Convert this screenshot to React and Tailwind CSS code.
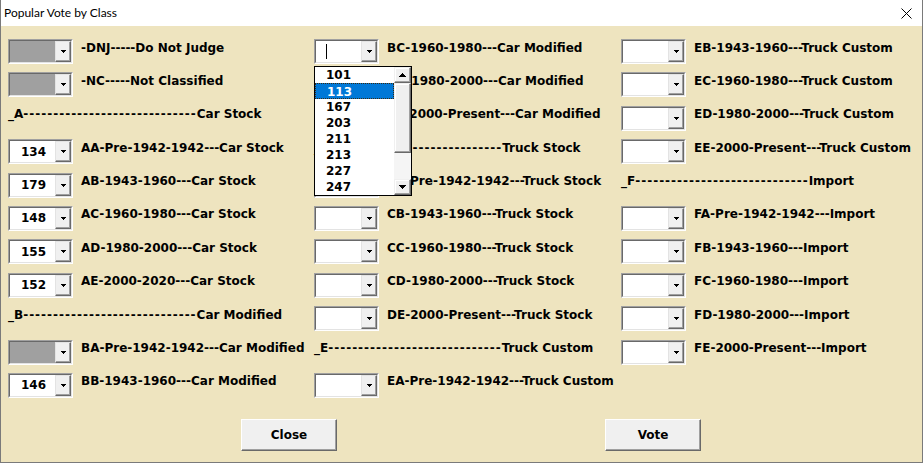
const DASHES = '-----------------------------';

const col1 = [
  { value: '', gray: true, label: '-DNJ-----Do Not Judge' },
  { value: '', gray: true, label: '-NC-----Not Classified' },
  { head: '_A', tail: 'Car Stock' },
  { value: '134', label: 'AA-Pre-1942-1942---Car Stock' },
  { value: '179', label: 'AB-1943-1960---Car Stock' },
  { value: '148', label: 'AC-1960-1980---Car Stock' },
  { value: '155', label: 'AD-1980-2000---Car Stock' },
  { value: '152', label: 'AE-2000-2020---Car Stock' },
  { head: '_B', tail: 'Car Modified' },
  { value: '', gray: true, label: 'BA-Pre-1942-1942---Car Modified' },
  { value: '146', label: 'BB-1943-1960---Car Modified' },
];

const col2 = [
  { value: '', caret: true, open: true, label: 'BC-1960-1980---Car Modified' },
  { value: '', label: 'BD-1980-2000---Car Modified' },
  { value: '', label: 'BE-2000-Present---Car Modified' },
  { head: '_C', tail: 'Truck Stock' },
  { value: '', label: 'CA-Pre-1942-1942---Truck Stock' },
  { value: '', label: 'CB-1943-1960---Truck Stock' },
  { value: '', label: 'CC-1960-1980---Truck Stock' },
  { value: '', label: 'CD-1980-2000---Truck Stock' },
  { value: '', label: 'DE-2000-Present---Truck Stock' },
  { head: '_E', tail: 'Truck Custom' },
  { value: '', label: 'EA-Pre-1942-1942---Truck Custom' },
];

const col3 = [
  { value: '', label: 'EB-1943-1960---Truck Custom' },
  { value: '', label: 'EC-1960-1980---Truck Custom' },
  { value: '', label: 'ED-1980-2000---Truck Custom' },
  { value: '', label: 'EE-2000-Present---Truck Custom' },
  { head: '_F', tail: 'Import' },
  { value: '', label: 'FA-Pre-1942-1942---Import' },
  { value: '', label: 'FB-1943-1960---Import' },
  { value: '', label: 'FC-1960-1980---Import' },
  { value: '', label: 'FD-1980-2000---Import' },
  { value: '', label: 'FE-2000-Present---Import' },
  null,
];

const listItems = ['101', '113', '167', '203', '211', '213', '227', '247'];

function TriDown() {
  return (
    <svg width="5" height="3" shapeRendering="crispEdges">
      <rect x="0" y="0" width="5" height="1" fill="#000" />
      <rect x="1" y="1" width="3" height="1" fill="#000" />
      <rect x="2" y="2" width="1" height="1" fill="#000" />
    </svg>
  );
}

function Arrow({ up }) {
  const rows = up ? [3, 2, 1, 0] : [0, 1, 2, 3];
  return (
    <svg width="7" height="4" shapeRendering="crispEdges">
      {rows.map((inset, i) => (
        <rect key={i} x={inset} y={i} width={7 - inset * 2} height="1" fill="#000" />
      ))}
    </svg>
  );
}

function DropBtn() {
  return (
    <div className="flex w-[16px] items-center justify-center border border-t-[#e3e3e3] border-l-[#e3e3e3] border-r-[#696969] border-b-[#696969] bg-[#f0f0f0] shadow-[inset_-1px_-1px_0_#a0a0a0]">
      <TriDown />
    </div>
  );
}

function Combo({ value, gray, caret }) {
  return (
    <div className="flex h-[25px] w-[65px] shrink-0 border border-t-[#a0a0a0] border-l-[#a0a0a0] border-r-white border-b-white">
      <div
        className={`flex flex-1 border border-t-[#696969] border-l-[#696969] border-r-[#e3e3e3] border-b-[#e3e3e3] ${
          gray ? 'bg-[#a0a0a0]' : 'bg-white'
        }`}
      >
        <div className="flex flex-1 items-center pl-[11px] text-[12px] leading-[14px]">
          {value}
          {caret && <span className="-ml-px h-[15px] w-px bg-black" />}
        </div>
        <DropBtn />
      </div>
    </div>
  );
}

function DropList() {
  return (
    <div className="absolute left-0 top-[27px] z-10 flex h-[130px] w-[98px] border border-black bg-white">
      <div className="flex-1">
        {listItems.map((n) => (
          <div
            key={n}
            className={`h-[16px] pl-[11px] text-[12px] leading-[16px] ${
              n === '113'
                ? 'border border-dotted border-[#3a2a10] bg-[#0078d7] pl-[10px] leading-[14px] text-white'
                : ''
            }`}
          >
            {n}
          </div>
        ))}
      </div>
      <div className="flex w-[17px] flex-col bg-[#ececec]">
        <div className="flex h-[16px] items-center justify-center border border-t-[#f0f0f0] border-l-[#f0f0f0] border-r-[#696969] border-b-[#696969] bg-[#f0f0f0] shadow-[inset_-1px_-1px_0_#a0a0a0,inset_1px_1px_0_#fff]">
          <Arrow up />
        </div>
        <div className="h-[70px] border border-t-[#f0f0f0] border-l-[#f0f0f0] border-r-[#696969] border-b-[#696969] bg-[#f0f0f0] shadow-[inset_-1px_-1px_0_#a0a0a0,inset_1px_1px_0_#fff]" />
        <div className="flex-1 bg-[#f5f5f5]" />
        <div className="flex h-[16px] items-center justify-center border border-t-[#f0f0f0] border-l-[#f0f0f0] border-r-[#696969] border-b-[#696969] bg-[#f0f0f0] shadow-[inset_-1px_-1px_0_#a0a0a0,inset_1px_1px_0_#fff]">
          <Arrow />
        </div>
      </div>
    </div>
  );
}

function Row({ row }) {
  if (!row) return <div className="h-[33.4px]" />;
  if (row.head) {
    return (
      <div className="h-[33.4px] pt-[1.5px] leading-[14px] whitespace-nowrap">
        {row.head}
        <span className="tracking-[1px]">{DASHES}</span>
        {row.tail}
      </div>
    );
  }
  return (
    <div className="relative flex h-[33.4px] items-start gap-[8px]">
      <Combo value={row.value} gray={row.gray} caret={row.caret} />
      <div className="pt-[1.5px] leading-[14px] whitespace-nowrap">{row.label}</div>
      {row.open && <DropList />}
    </div>
  );
}

function Column({ rows }) {
  return (
    <div className="flex flex-col">
      {rows.map((r, i) => (
        <Row key={i} row={r} />
      ))}
    </div>
  );
}

export default function App() {
  return (
    <div className="flex h-[463px] w-[923px] flex-col overflow-hidden border-x border-b border-[#7a7a7a] bg-[#eee4bf] text-black">
      <div className="flex h-[26px] shrink-0 items-center justify-between bg-white pl-[3px] pr-[10px] font-['Lato',sans-serif] text-[12px] text-black">
        <span>Popular Vote by Class</span>
        <svg width="11" height="11" viewBox="0 0 11 11">
          <path d="M0.5 0.5L10.5 10.5M10.5 0.5L0.5 10.5" stroke="#000" strokeWidth="1" />
        </svg>
      </div>

      <div className="flex-1 pt-[13px] pl-[7px] font-['DejaVu_Sans',sans-serif] text-[12px] font-bold">
        <div className="grid grid-cols-[306px_307px_1fr]">
          <Column rows={col1} />
          <Column rows={col2} />
          <Column rows={col3} />
        </div>

        <div className="mt-[13px] flex gap-[268px] pl-[233px]">
          {['Close', 'Vote'].map((t) => (
            <button
              key={t}
              className="flex h-[32px] w-[96px] items-center justify-center border border-t-white border-l-white border-r-[#696969] border-b-[#696969] bg-[#f0f0f0] font-bold shadow-[inset_-1px_-1px_0_#a0a0a0]"
            >
              {t}
            </button>
          ))}
        </div>
      </div>
    </div>
  );
}
